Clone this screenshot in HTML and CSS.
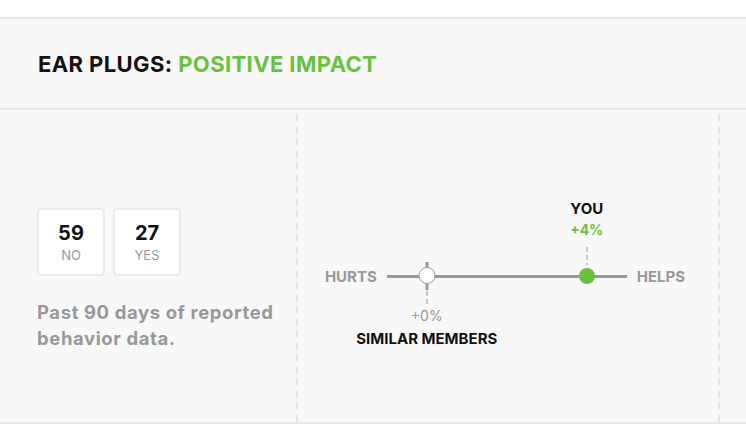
FILE: index.html
```html
<!DOCTYPE html>
<html lang="en">
<head>
    <meta charset="UTF-8">
    <meta name="viewport" content="width=device-width, initial-scale=1.0">
    <title>Ear Plugs Impact</title>
    <link rel="stylesheet" href="styles.css">
</head>
<body>
    <div class="panel">
        <div class="panel-head">
            <h2>EAR PLUGS: <span class="good">POSITIVE IMPACT</span></h2>
        </div>
        <div class="panel-body">
            <div class="col-left">
                <div class="counts">
                    <div class="count"><b>59</b><span>NO</span></div>
                    <div class="count"><b>27</b><span>YES</span></div>
                </div>
                <p class="note">Past 90 days of reported behavior data.</p>
            </div>
            <div class="divider"></div>
            <div class="col-mid">
                <div class="scale">
                    <span class="end">HURTS</span>
                    <div class="track">
                        <div class="mark mark-similar" style="left: 16.67%;">
                            <span class="tick tick-top"></span>
                            <span class="dot dot-white"></span>
                            <span class="tick tick-bottom"></span>
                            <span class="stem stem-down"></span>
                            <span class="val val-gray">+0%</span>
                            <span class="who who-below">SIMILAR MEMBERS</span>
                        </div>
                        <div class="mark mark-you" style="left: 83.33%;">
                            <span class="who who-above">YOU</span>
                            <span class="val val-green">+4%</span>
                            <span class="stem stem-up"></span>
                            <span class="dot dot-green"></span>
                        </div>
                    </div>
                    <span class="end">HELPS</span>
                </div>
            </div>
            <div class="divider"></div>
            <div class="col-right"></div>
        </div>
    </div>
</body>
</html>
```

FILE: styles.css
```css
body {
    margin: 0;
    padding-top: 17px;
    background: #fff;
    font-family: 'Inter', 'Lato', sans-serif;
    color: #111;
}
.panel {
    background: #f8f8f8;
    border-top: 2px solid #e9e9e9;
    border-bottom: 2px solid #e9e9e9;
}
.panel-head {
    height: 89px;
    display: flex;
    align-items: center;
    padding-left: 38px;
    border-bottom: 2px solid #e9e9e9;
}
.panel-head h2 {
    margin: 0;
    font-size: 22px;
    font-weight: 700;
    letter-spacing: 0.4px;
    color: #111;
}
.good {
    color: #68c23e;
}
.panel-body {
    display: flex;
    height: 312px;
}
.divider {
    width: 2px;
    margin-top: 4px;
    background: repeating-linear-gradient(to bottom, #e8e8e8 0 8px, transparent 8px 12px);
}
.col-left {
    width: 296px;
    box-sizing: border-box;
    padding: 98px 10px 0 37px;
}
.counts {
    display: flex;
    gap: 8px;
}
.count {
    width: 64px;
    height: 64px;
    background: #fff;
    border: 2px solid #ebebeb;
    border-radius: 4px;
    display: flex;
    flex-direction: column;
    align-items: center;
    justify-content: center;
}
.count b {
    font-size: 20px;
    font-weight: 700;
    line-height: 22px;
    margin-top: 4px;
}
.count span {
    font-size: 13px;
    color: #999;
    line-height: 22px;
}
.note {
    margin: 23px 0 0;
    font-size: 18.5px;
    font-weight: 700;
    line-height: 26px;
    color: #999;
    letter-spacing: 0.6px;
}
.col-mid {
    width: 420px;
    padding-top: 156px;
}
.scale {
    display: flex;
    align-items: center;
    justify-content: center;
    height: 20px;
    gap: 10px;
    padding-right: 6px;
}
.end {
    font-size: 15px;
    font-weight: 700;
    color: #999;
}
.track {
    position: relative;
    width: 240px;
    height: 3px;
    background: #999;
}
.col-right {
    flex: 1;
}
.mark {
    position: absolute;
    top: 1px;
    width: 0;
    height: 0;
}
.mark > * {
    position: absolute;
    transform: translateX(-50%);
    white-space: nowrap;
}
.dot {
    width: 16px;
    height: 16px;
    border-radius: 50%;
    top: -8px;
    box-sizing: border-box;
}
.dot-white {
    background: #fff;
    border: 1.5px solid #999;
    width: 17px;
    height: 17px;
    top: -9px;
}
.dot-green {
    background: #68c23e;
}
.tick {
    width: 3px;
    height: 6px;
    background: #999;
}
.tick-top {
    top: -14px;
}
.tick-bottom {
    top: 8px;
}
.stem {
    width: 1px;
    background: repeating-linear-gradient(to bottom, #999 0 5px, transparent 5px 8px);
}
.stem-down {
    top: 15px;
    height: 13px;
}
.stem-up {
    top: -29px;
    height: 18px;
}
.val {
    font-size: 14px;
    line-height: 16px;
}
.val-gray {
    top: 32px;
    color: #999;
}
.val-green {
    top: -54px;
    color: #68c23e;
    font-weight: 700;
}
.who {
    font-size: 15px;
    font-weight: 700;
    line-height: 16px;
    color: #111;
}
.who-below {
    top: 55px;
}
.who-above {
    top: -75px;
}
```
